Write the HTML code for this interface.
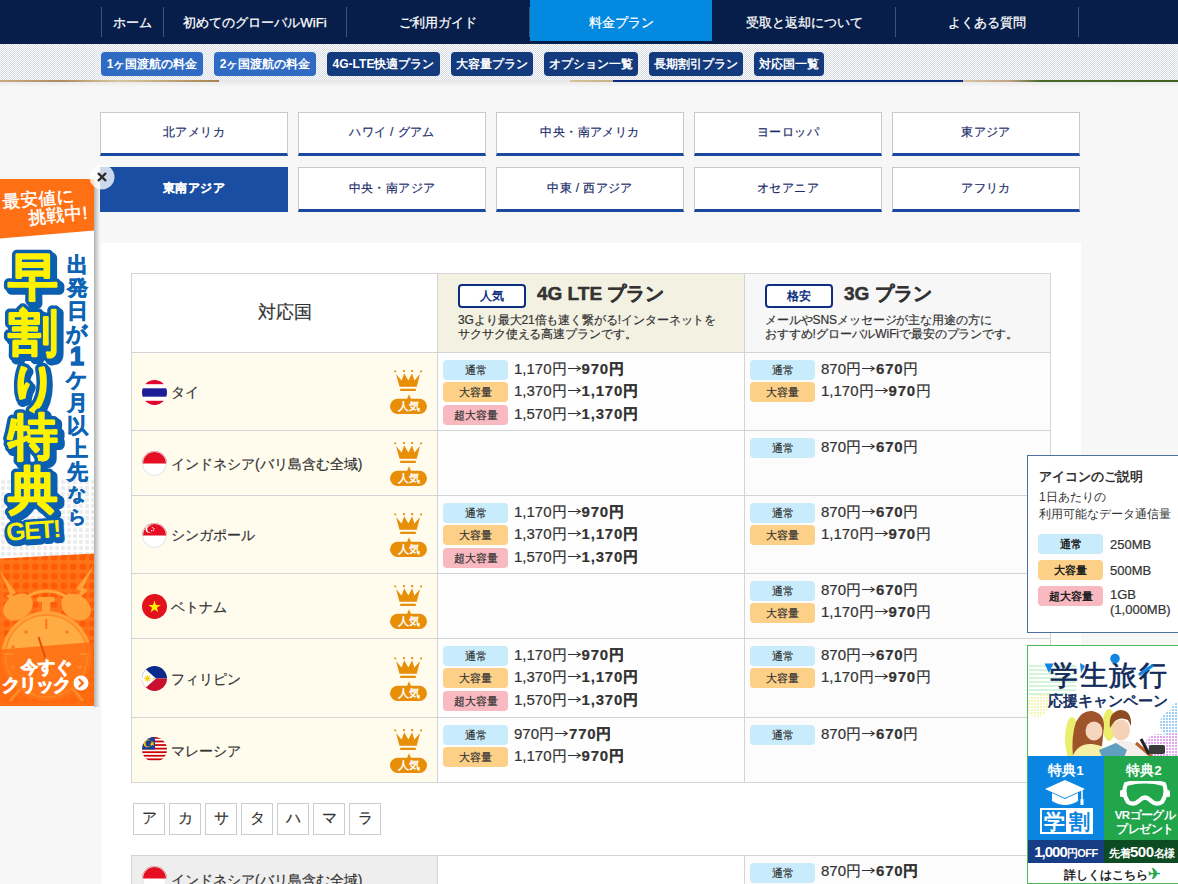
<!DOCTYPE html>
<html lang="ja"><head><meta charset="utf-8">
<style>
*{box-sizing:border-box;margin:0;padding:0}
html,body{width:1178px;height:884px;overflow:hidden}
body{background:#f7f7f7;font-family:"Liberation Sans",sans-serif;color:#333;position:relative}
.a{position:absolute}
/* nav */
#nav{left:0;top:0;width:1178px;height:44px;background:#061e49}
#nav .it{position:absolute;top:0;height:44px;color:#fff;font-size:13.3px;-webkit-text-stroke:.25px #fff;line-height:45px;text-align:center;white-space:nowrap}
#nav .sep{position:absolute;top:7px;width:1px;height:30px;background:#3f5578}
#nav .act{background:#0489e0;height:41px;line-height:45px}
/* strip */
#strip{left:0;top:44px;width:1178px;height:36px;background:repeating-conic-gradient(#d6dbe4 0 25%,#fdfdfe 0 50%) 0 0/2px 2px}
#photo{left:0;top:80px;width:1178px;height:2px;background:linear-gradient(90deg,#c9ab80 0,#b08a60 60px,#d8c7a0 120px,#a8804f 219px,transparent 219px,transparent 570px,#d4c39c 570px,#c8b088 613px,#0a2a7c 613px,#0a2a7c 963px,#d8c4a4 963px,#c0a088 1010px,#4b6a2a 1040px,#3f6020 1178px)}
.sb{position:absolute;top:52px;height:24px;border-radius:4px;background:#133a7c;color:#fff;font-size:12px;font-weight:bold;line-height:25px;text-align:center;white-space:nowrap}
.sb.l{background:#306bc3}
/* region buttons */
.rb{position:absolute;width:188px;height:44px;background:#fff;border:1px solid #c9c9c9;border-bottom:3px solid #1a4aa0;color:#1c2d6b;font-size:12px;letter-spacing:.4px;line-height:39px;text-align:center}
.rb.on{background:#1a4ea2;border-color:#1a4ea2;color:#fff;font-weight:bold}
#panel{left:101px;top:243px;width:980px;height:641px;background:#fff}
.hl{position:absolute;left:131px;width:920px;height:1px;background:#d4d4d4}
.vl{position:absolute;top:273px;width:1px;height:510px;background:#d4d4d4}
.th1{left:132px;top:300px;width:305px;text-align:center;font-size:18px;line-height:24px;color:#333}
.hb{width:68px;height:24px;border:2px solid #0c2f80;border-radius:4px;background:#fff;color:#0c2f80;font-size:12px;font-weight:bold;text-align:center;line-height:20px}
.ht{font-size:19px;font-weight:bold;color:#333;line-height:26px;white-space:nowrap;-webkit-text-stroke:.5px #333}
.hd{font-size:12px;letter-spacing:-0.1px;line-height:14.5px;color:#333;white-space:nowrap}
.flag{width:25px;height:25px}
.flag svg{display:block}
.crown{width:38px;height:45px}
.crown svg{display:block}
.cn{font-size:14px;letter-spacing:-0.3px;line-height:20px;color:#333;white-space:nowrap;margin-top:1px}
.bd{width:65px;height:20px;border-radius:4px;font-size:11px;line-height:20px;text-align:center;color:#333}
.bd.n{background:#c8ecfb}.bd.l{background:#fdd088}.bd.x{background:#f8b9c1}
.ab{position:absolute;top:803px;width:32px;height:32px;border:1px solid #cdcdcd;background:#fff;font-size:15px;line-height:27px;text-align:center;color:#333}
#lg{left:1027px;top:455px;width:160px;height:178px;border:1px solid #4e70a0;background:#fff;color:#333}
.lb{width:65px;height:20px;border-radius:4px;font-size:11px;font-weight:bold;line-height:20px;text-align:center;color:#222}
.lb.n{background:#c8ecfb}.lb.l{background:#fdd088}.lb.x{background:#f8b9c1}
.lv{font-size:13px;line-height:20px;white-space:nowrap;color:#333}
#rbn{left:1027px;top:645px;width:160px;height:239px;border:1px solid #49b95a;border-right:0;background:#fff;overflow:hidden}
#rbn .wt{color:#fff;text-align:center;white-space:nowrap}
#lbn{left:0;top:179px;width:100px;height:528px}
#lbn svg,#cls svg{display:block}
#cls{left:89px;top:164px;width:26px;height:26px}
.pr{font-size:15px;line-height:20px;color:#333;white-space:nowrap;margin-top:-1px}
.pr b{letter-spacing:.8px}
.ar{display:inline-block;vertical-align:1px}
.cn,.pr,.th1,.hd,.lv,.ab,.rb,.bd{-webkit-text-stroke:.2px currentColor}
.cn{letter-spacing:0}
</style></head><body>
<div id="nav" class="a">
  <div class="sep" style="left:101px"></div>
  <div class="it" style="left:102px;width:61px">ホーム</div>
  <div class="sep" style="left:163px"></div>
  <div class="it" style="left:164px;width:182px">初めてのグローバルWiFi</div>
  <div class="sep" style="left:346px"></div>
  <div class="it" style="left:347px;width:182px">ご利用ガイド</div>
  <div class="sep" style="left:529px"></div>
  <div class="it act" style="left:530px;width:182px">料金プラン</div>
  <div class="it" style="left:713px;width:182px">受取と返却について</div>
  <div class="sep" style="left:895px"></div>
  <div class="it" style="left:896px;width:182px">よくある質問</div>
  <div class="sep" style="left:1078px"></div>
</div>
<div id="strip" class="a"></div>
<div class="a" style="left:0;top:80px;width:1178px;height:7px;background:linear-gradient(rgba(0,0,0,.07),rgba(0,0,0,0))"></div>
<div id="photo" class="a"></div>
<div class="sb l" style="left:101px;width:102px">1ヶ国渡航の料金</div>
<div class="sb l" style="left:214px;width:102px">2ヶ国渡航の料金</div>
<div class="sb" style="left:327px;width:113px">4G-LTE快適プラン</div>
<div class="sb" style="left:451px;width:82px">大容量プラン</div>
<div class="sb" style="left:544px;width:94px">オプション一覧</div>
<div class="sb" style="left:649px;width:94px">長期割引プラン</div>
<div class="sb" style="left:754px;width:70px">対応国一覧</div>

<div class="rb" style="left:100px;top:112px">北アメリカ</div>
<div class="rb" style="left:298px;top:112px">ハワイ / グアム</div>
<div class="rb" style="left:496px;top:112px">中央・南アメリカ</div>
<div class="rb" style="left:694px;top:112px">ヨーロッパ</div>
<div class="rb" style="left:892px;top:112px">東アジア</div>
<div class="rb on" style="left:100px;top:167px;height:45px;line-height:40px">東南アジア</div>
<div class="rb" style="left:298px;top:167px;height:45px;line-height:40px">中央・南アジア</div>
<div class="rb" style="left:496px;top:167px;height:45px;line-height:40px">中東 / 西アジア</div>
<div class="rb" style="left:694px;top:167px;height:45px;line-height:40px">オセアニア</div>
<div class="rb" style="left:892px;top:167px;height:45px;line-height:40px">アフリカ</div>

<div id="panel" class="a"></div>
<!--TABLE-->
<div class="a" style="left:131px;top:273px;width:920px;height:510px;border:1px solid #d4d4d4;background:#fff"></div>
<div class="a" style="left:438px;top:274px;width:306px;height:78px;background:#f3f1e2"></div>
<div class="a" style="left:745px;top:274px;width:305px;height:78px;background:#f7f7f7"></div>
<div class="a" style="left:132px;top:353px;width:305px;height:77px;background:#fffcee"></div>
<div class="a" style="left:438px;top:353px;width:306px;height:77px;background:#fefefe"></div>
<div class="a" style="left:745px;top:353px;width:305px;height:77px;background:#fcfcfc"></div>
<div class="a" style="left:132px;top:431px;width:305px;height:64px;background:#fffcee"></div>
<div class="a" style="left:438px;top:431px;width:306px;height:64px;background:#fefefe"></div>
<div class="a" style="left:745px;top:431px;width:305px;height:64px;background:#fcfcfc"></div>
<div class="a" style="left:132px;top:496px;width:305px;height:77px;background:#fffcee"></div>
<div class="a" style="left:438px;top:496px;width:306px;height:77px;background:#fefefe"></div>
<div class="a" style="left:745px;top:496px;width:305px;height:77px;background:#fcfcfc"></div>
<div class="a" style="left:132px;top:574px;width:305px;height:64px;background:#fffcee"></div>
<div class="a" style="left:438px;top:574px;width:306px;height:64px;background:#fefefe"></div>
<div class="a" style="left:745px;top:574px;width:305px;height:64px;background:#fcfcfc"></div>
<div class="a" style="left:132px;top:639px;width:305px;height:78px;background:#fffcee"></div>
<div class="a" style="left:438px;top:639px;width:306px;height:78px;background:#fefefe"></div>
<div class="a" style="left:745px;top:639px;width:305px;height:78px;background:#fcfcfc"></div>
<div class="a" style="left:132px;top:718px;width:305px;height:64px;background:#fffcee"></div>
<div class="a" style="left:438px;top:718px;width:306px;height:64px;background:#fefefe"></div>
<div class="a" style="left:745px;top:718px;width:305px;height:64px;background:#fcfcfc"></div>
<div class="hl" style="top:352px"></div>
<div class="hl" style="top:430px"></div>
<div class="hl" style="top:495px"></div>
<div class="hl" style="top:573px"></div>
<div class="hl" style="top:638px"></div>
<div class="hl" style="top:717px"></div>
<div class="vl" style="left:437px"></div>
<div class="vl" style="left:744px"></div>
<div class="a th1">対応国</div>
<div class="a hb" style="left:458px;top:284px">人気</div>
<div class="a ht" style="left:537px;top:281px">4G LTE プラン</div>
<div class="a hd" style="left:458px;top:312.5px">3Gより最大21倍も速く繋がる!インターネットを<br>サクサク使える高速プランです。</div>
<div class="a hb" style="left:765px;top:284px">格安</div>
<div class="a ht" style="left:844px;top:281px">3G プラン</div>
<div class="a hd" style="left:765px;top:312.5px">メールやSNSメッセージが主な用途の方に<br>おすすめ!グローバルWiFiで最安のプランです。</div>
<div class="a flag th" style="left:142px;top:380px"><svg width="25" height="25" viewBox="0 0 25 25"><defs><clipPath id="cth"><circle cx="12.5" cy="12.5" r="12.5"/></clipPath></defs><g clip-path="url(#cth)"><rect x="0" y="0" width="25" height="25" fill="#fff"/><rect x="0" y="0" width="25" height="4.2" fill="#e4032e"/><rect x="0" y="20.8" width="25" height="4.2" fill="#e4032e"/><rect x="0" y="8.3" width="25" height="8.4" fill="#1d1d96"/></g></svg></div>
<div class="a cn" style="left:171px;top:381px">タイ</div>
<div class="a crown" style="left:389px;top:370px"><svg width="38" height="45" viewBox="0 0 38 45"><g fill="#e88f0a"><rect x="5.2" y="0.5" width="2" height="1.8" rx=".5"/><rect x="14" y="0" width="2" height="1.9" rx=".5"/><rect x="22.1" y="0" width="2" height="1.9" rx=".5"/><rect x="31" y="0.5" width="2" height="1.8" rx=".5"/><polygon points="7,4 12.5,10.6 15.3,3.3 19.3,10.6 23.1,3.3 25.4,10.6 31,4 27.8,16.7 10.5,16.7"/><rect x="11" y="18.7" width="16" height="2.4" rx="1"/><polygon points="20,24.3 22.2,29.5 17.8,29.5"/><rect x="1" y="28.7" width="37" height="15.3" rx="7.65"/></g><text x="19.5" y="40.2" text-anchor="middle" font-size="10.5" font-weight="bold" fill="#fff" font-family="Liberation Sans,sans-serif">人気</text></svg></div>
<div class="a bd n" style="left:443px;top:360px">通常</div>
<div class="a pr b2" style="left:514px;top:360px">1,170円<svg class="ar" width="15" height="8" viewBox="0 0 15 8"><path d="M1 3.5H13.3M9.6 0.9L13.4 3.5 9.6 6.1" stroke="#333" stroke-width="1.1" fill="none"/></svg><b>970</b><b>円</b></div>
<div class="a bd l" style="left:443px;top:382px">大容量</div>
<div class="a pr b2" style="left:514px;top:382px">1,370円<svg class="ar" width="15" height="8" viewBox="0 0 15 8"><path d="M1 3.5H13.3M9.6 0.9L13.4 3.5 9.6 6.1" stroke="#333" stroke-width="1.1" fill="none"/></svg><b>1,170</b><b>円</b></div>
<div class="a bd x" style="left:443px;top:405px">超大容量</div>
<div class="a pr b2" style="left:514px;top:405px">1,570円<svg class="ar" width="15" height="8" viewBox="0 0 15 8"><path d="M1 3.5H13.3M9.6 0.9L13.4 3.5 9.6 6.1" stroke="#333" stroke-width="1.1" fill="none"/></svg><b>1,370</b><b>円</b></div>
<div class="a bd n" style="left:750px;top:360px">通常</div>
<div class="a pr b3" style="left:821px;top:360px">870円<svg class="ar" width="15" height="8" viewBox="0 0 15 8"><path d="M1 3.5H13.3M9.6 0.9L13.4 3.5 9.6 6.1" stroke="#333" stroke-width="1.1" fill="none"/></svg><b>670</b>円</div>
<div class="a bd l" style="left:750px;top:382px">大容量</div>
<div class="a pr b3" style="left:821px;top:382px">1,170円<svg class="ar" width="15" height="8" viewBox="0 0 15 8"><path d="M1 3.5H13.3M9.6 0.9L13.4 3.5 9.6 6.1" stroke="#333" stroke-width="1.1" fill="none"/></svg><b>970</b>円</div>
<div class="a flag id" style="left:142px;top:451px"><svg width="25" height="25" viewBox="0 0 25 25"><defs><clipPath id="cid"><circle cx="12.5" cy="12.5" r="12.5"/></clipPath></defs><g clip-path="url(#cid)"><rect x="0" y="0" width="25" height="25" fill="#fff"/><rect x="0" y="0" width="25" height="12.5" fill="#e60e23"/></g><circle cx="12.5" cy="12.5" r="12" fill="none" stroke="#e2e2e2" stroke-width="1"/></svg></div>
<div class="a cn" style="left:171px;top:453px">インドネシア(バリ島含む全域)</div>
<div class="a crown" style="left:389px;top:442px"><svg width="38" height="45" viewBox="0 0 38 45"><g fill="#e88f0a"><rect x="5.2" y="0.5" width="2" height="1.8" rx=".5"/><rect x="14" y="0" width="2" height="1.9" rx=".5"/><rect x="22.1" y="0" width="2" height="1.9" rx=".5"/><rect x="31" y="0.5" width="2" height="1.8" rx=".5"/><polygon points="7,4 12.5,10.6 15.3,3.3 19.3,10.6 23.1,3.3 25.4,10.6 31,4 27.8,16.7 10.5,16.7"/><rect x="11" y="18.7" width="16" height="2.4" rx="1"/><polygon points="20,24.3 22.2,29.5 17.8,29.5"/><rect x="1" y="28.7" width="37" height="15.3" rx="7.65"/></g><text x="19.5" y="40.2" text-anchor="middle" font-size="10.5" font-weight="bold" fill="#fff" font-family="Liberation Sans,sans-serif">人気</text></svg></div>
<div class="a bd n" style="left:750px;top:438px">通常</div>
<div class="a pr b3" style="left:821px;top:438px">870円<svg class="ar" width="15" height="8" viewBox="0 0 15 8"><path d="M1 3.5H13.3M9.6 0.9L13.4 3.5 9.6 6.1" stroke="#333" stroke-width="1.1" fill="none"/></svg><b>670</b>円</div>
<div class="a flag sg" style="left:142px;top:523px"><svg width="25" height="25" viewBox="0 0 25 25"><defs><clipPath id="csg"><circle cx="12.5" cy="12.5" r="12.5"/></clipPath></defs><g clip-path="url(#csg)"><rect x="0" y="0" width="25" height="25" fill="#fff"/><rect x="0" y="0" width="25" height="12.5" fill="#e60e23"/><circle cx="7.2" cy="6.2" r="3.6" fill="#fff"/><circle cx="8.6" cy="6.2" r="3.3" fill="#e60e23"/><circle cx="10.5" cy="4.6" r=".7" fill="#fff"/><circle cx="12" cy="5.8" r=".7" fill="#fff"/><circle cx="11.4" cy="7.6" r=".7" fill="#fff"/><circle cx="9.6" cy="7.6" r=".7" fill="#fff"/></g><circle cx="12.5" cy="12.5" r="12" fill="none" stroke="#e2e2e2" stroke-width="1"/></svg></div>
<div class="a cn" style="left:171px;top:524px">シンガポール</div>
<div class="a crown" style="left:389px;top:513px"><svg width="38" height="45" viewBox="0 0 38 45"><g fill="#e88f0a"><rect x="5.2" y="0.5" width="2" height="1.8" rx=".5"/><rect x="14" y="0" width="2" height="1.9" rx=".5"/><rect x="22.1" y="0" width="2" height="1.9" rx=".5"/><rect x="31" y="0.5" width="2" height="1.8" rx=".5"/><polygon points="7,4 12.5,10.6 15.3,3.3 19.3,10.6 23.1,3.3 25.4,10.6 31,4 27.8,16.7 10.5,16.7"/><rect x="11" y="18.7" width="16" height="2.4" rx="1"/><polygon points="20,24.3 22.2,29.5 17.8,29.5"/><rect x="1" y="28.7" width="37" height="15.3" rx="7.65"/></g><text x="19.5" y="40.2" text-anchor="middle" font-size="10.5" font-weight="bold" fill="#fff" font-family="Liberation Sans,sans-serif">人気</text></svg></div>
<div class="a bd n" style="left:443px;top:503px">通常</div>
<div class="a pr b2" style="left:514px;top:503px">1,170円<svg class="ar" width="15" height="8" viewBox="0 0 15 8"><path d="M1 3.5H13.3M9.6 0.9L13.4 3.5 9.6 6.1" stroke="#333" stroke-width="1.1" fill="none"/></svg><b>970</b><b>円</b></div>
<div class="a bd l" style="left:443px;top:525px">大容量</div>
<div class="a pr b2" style="left:514px;top:525px">1,370円<svg class="ar" width="15" height="8" viewBox="0 0 15 8"><path d="M1 3.5H13.3M9.6 0.9L13.4 3.5 9.6 6.1" stroke="#333" stroke-width="1.1" fill="none"/></svg><b>1,170</b><b>円</b></div>
<div class="a bd x" style="left:443px;top:548px">超大容量</div>
<div class="a pr b2" style="left:514px;top:548px">1,570円<svg class="ar" width="15" height="8" viewBox="0 0 15 8"><path d="M1 3.5H13.3M9.6 0.9L13.4 3.5 9.6 6.1" stroke="#333" stroke-width="1.1" fill="none"/></svg><b>1,370</b><b>円</b></div>
<div class="a bd n" style="left:750px;top:503px">通常</div>
<div class="a pr b3" style="left:821px;top:503px">870円<svg class="ar" width="15" height="8" viewBox="0 0 15 8"><path d="M1 3.5H13.3M9.6 0.9L13.4 3.5 9.6 6.1" stroke="#333" stroke-width="1.1" fill="none"/></svg><b>670</b>円</div>
<div class="a bd l" style="left:750px;top:525px">大容量</div>
<div class="a pr b3" style="left:821px;top:525px">1,170円<svg class="ar" width="15" height="8" viewBox="0 0 15 8"><path d="M1 3.5H13.3M9.6 0.9L13.4 3.5 9.6 6.1" stroke="#333" stroke-width="1.1" fill="none"/></svg><b>970</b>円</div>
<div class="a flag vn" style="left:142px;top:594px"><svg width="25" height="25" viewBox="0 0 25 25"><defs><clipPath id="cvn"><circle cx="12.5" cy="12.5" r="12.5"/></clipPath></defs><g clip-path="url(#cvn)"><rect x="0" y="0" width="25" height="25" fill="#e3111b"/><polygon points="12.5,6.5 14,11 18.7,11 14.9,13.8 16.3,18.3 12.5,15.5 8.7,18.3 10.1,13.8 6.3,11 11,11" fill="#fff100"/></g></svg></div>
<div class="a cn" style="left:171px;top:596px">ベトナム</div>
<div class="a crown" style="left:389px;top:585px"><svg width="38" height="45" viewBox="0 0 38 45"><g fill="#e88f0a"><rect x="5.2" y="0.5" width="2" height="1.8" rx=".5"/><rect x="14" y="0" width="2" height="1.9" rx=".5"/><rect x="22.1" y="0" width="2" height="1.9" rx=".5"/><rect x="31" y="0.5" width="2" height="1.8" rx=".5"/><polygon points="7,4 12.5,10.6 15.3,3.3 19.3,10.6 23.1,3.3 25.4,10.6 31,4 27.8,16.7 10.5,16.7"/><rect x="11" y="18.7" width="16" height="2.4" rx="1"/><polygon points="20,24.3 22.2,29.5 17.8,29.5"/><rect x="1" y="28.7" width="37" height="15.3" rx="7.65"/></g><text x="19.5" y="40.2" text-anchor="middle" font-size="10.5" font-weight="bold" fill="#fff" font-family="Liberation Sans,sans-serif">人気</text></svg></div>
<div class="a bd n" style="left:750px;top:581px">通常</div>
<div class="a pr b3" style="left:821px;top:581px">870円<svg class="ar" width="15" height="8" viewBox="0 0 15 8"><path d="M1 3.5H13.3M9.6 0.9L13.4 3.5 9.6 6.1" stroke="#333" stroke-width="1.1" fill="none"/></svg><b>670</b>円</div>
<div class="a bd l" style="left:750px;top:603px">大容量</div>
<div class="a pr b3" style="left:821px;top:603px">1,170円<svg class="ar" width="15" height="8" viewBox="0 0 15 8"><path d="M1 3.5H13.3M9.6 0.9L13.4 3.5 9.6 6.1" stroke="#333" stroke-width="1.1" fill="none"/></svg><b>970</b>円</div>
<div class="a flag ph" style="left:142px;top:666px"><svg width="25" height="25" viewBox="0 0 25 25"><defs><clipPath id="cph"><circle cx="12.5" cy="12.5" r="12.5"/></clipPath></defs><g clip-path="url(#cph)"><rect x="0" y="0" width="25" height="12.5" fill="#0b2a8c"/><rect x="0" y="12.5" width="25" height="12.5" fill="#c8102e"/><polygon points="0,0 14,12.5 0,25" fill="#fff"/><circle cx="5.5" cy="12.5" r="2.2" fill="#fcd116"/><g stroke="#fcd116" stroke-width=".8"><line x1="2" y1="12.5" x2="9" y2="12.5"/><line x1="5.5" y1="9" x2="5.5" y2="16"/><line x1="3" y1="10" x2="8" y2="15"/><line x1="8" y1="10" x2="3" y2="15"/></g><circle cx="2" cy="4" r=".8" fill="#fcd116"/><circle cx="2" cy="21" r=".8" fill="#fcd116"/><circle cx="11.5" cy="12.5" r=".8" fill="#fcd116"/></g></svg></div>
<div class="a cn" style="left:171px;top:668px">フィリピン</div>
<div class="a crown" style="left:389px;top:657px"><svg width="38" height="45" viewBox="0 0 38 45"><g fill="#e88f0a"><rect x="5.2" y="0.5" width="2" height="1.8" rx=".5"/><rect x="14" y="0" width="2" height="1.9" rx=".5"/><rect x="22.1" y="0" width="2" height="1.9" rx=".5"/><rect x="31" y="0.5" width="2" height="1.8" rx=".5"/><polygon points="7,4 12.5,10.6 15.3,3.3 19.3,10.6 23.1,3.3 25.4,10.6 31,4 27.8,16.7 10.5,16.7"/><rect x="11" y="18.7" width="16" height="2.4" rx="1"/><polygon points="20,24.3 22.2,29.5 17.8,29.5"/><rect x="1" y="28.7" width="37" height="15.3" rx="7.65"/></g><text x="19.5" y="40.2" text-anchor="middle" font-size="10.5" font-weight="bold" fill="#fff" font-family="Liberation Sans,sans-serif">人気</text></svg></div>
<div class="a bd n" style="left:443px;top:646px">通常</div>
<div class="a pr b2" style="left:514px;top:646px">1,170円<svg class="ar" width="15" height="8" viewBox="0 0 15 8"><path d="M1 3.5H13.3M9.6 0.9L13.4 3.5 9.6 6.1" stroke="#333" stroke-width="1.1" fill="none"/></svg><b>970</b><b>円</b></div>
<div class="a bd l" style="left:443px;top:668px">大容量</div>
<div class="a pr b2" style="left:514px;top:668px">1,370円<svg class="ar" width="15" height="8" viewBox="0 0 15 8"><path d="M1 3.5H13.3M9.6 0.9L13.4 3.5 9.6 6.1" stroke="#333" stroke-width="1.1" fill="none"/></svg><b>1,170</b><b>円</b></div>
<div class="a bd x" style="left:443px;top:691px">超大容量</div>
<div class="a pr b2" style="left:514px;top:691px">1,570円<svg class="ar" width="15" height="8" viewBox="0 0 15 8"><path d="M1 3.5H13.3M9.6 0.9L13.4 3.5 9.6 6.1" stroke="#333" stroke-width="1.1" fill="none"/></svg><b>1,370</b><b>円</b></div>
<div class="a bd n" style="left:750px;top:646px">通常</div>
<div class="a pr b3" style="left:821px;top:646px">870円<svg class="ar" width="15" height="8" viewBox="0 0 15 8"><path d="M1 3.5H13.3M9.6 0.9L13.4 3.5 9.6 6.1" stroke="#333" stroke-width="1.1" fill="none"/></svg><b>670</b>円</div>
<div class="a bd l" style="left:750px;top:668px">大容量</div>
<div class="a pr b3" style="left:821px;top:668px">1,170円<svg class="ar" width="15" height="8" viewBox="0 0 15 8"><path d="M1 3.5H13.3M9.6 0.9L13.4 3.5 9.6 6.1" stroke="#333" stroke-width="1.1" fill="none"/></svg><b>970</b>円</div>
<div class="a flag my" style="left:142px;top:737px"><svg width="25" height="25" viewBox="0 0 25 25"><defs><clipPath id="cmy"><circle cx="12.5" cy="12.5" r="12.5"/></clipPath></defs><g clip-path="url(#cmy)"><rect x="0" y="0" width="25" height="25" fill="#fff"/><rect x="0" y="0.00" width="25" height="1.79" fill="#cc0001"/><rect x="0" y="3.57" width="25" height="1.79" fill="#cc0001"/><rect x="0" y="7.14" width="25" height="1.79" fill="#cc0001"/><rect x="0" y="10.71" width="25" height="1.79" fill="#cc0001"/><rect x="0" y="14.29" width="25" height="1.79" fill="#cc0001"/><rect x="0" y="17.86" width="25" height="1.79" fill="#cc0001"/><rect x="0" y="21.43" width="25" height="1.79" fill="#cc0001"/><rect x="0" y="0" width="13" height="12.5" fill="#1c3f94"/><circle cx="5.6" cy="6.4" r="3.8" fill="#fc0"/><circle cx="6.8" cy="6.4" r="3.2" fill="#1c3f94"/><polygon points="10,3.6 10.7,5.6 12.6,5.4 11.2,6.8 12.2,8.6 10.3,8 9.4,9.6 9.2,7.8 7.4,7.4 9.1,6.4" fill="#fc0"/></g></svg></div>
<div class="a cn" style="left:171px;top:740px">マレーシア</div>
<div class="a crown" style="left:389px;top:729px"><svg width="38" height="45" viewBox="0 0 38 45"><g fill="#e88f0a"><rect x="5.2" y="0.5" width="2" height="1.8" rx=".5"/><rect x="14" y="0" width="2" height="1.9" rx=".5"/><rect x="22.1" y="0" width="2" height="1.9" rx=".5"/><rect x="31" y="0.5" width="2" height="1.8" rx=".5"/><polygon points="7,4 12.5,10.6 15.3,3.3 19.3,10.6 23.1,3.3 25.4,10.6 31,4 27.8,16.7 10.5,16.7"/><rect x="11" y="18.7" width="16" height="2.4" rx="1"/><polygon points="20,24.3 22.2,29.5 17.8,29.5"/><rect x="1" y="28.7" width="37" height="15.3" rx="7.65"/></g><text x="19.5" y="40.2" text-anchor="middle" font-size="10.5" font-weight="bold" fill="#fff" font-family="Liberation Sans,sans-serif">人気</text></svg></div>
<div class="a bd n" style="left:443px;top:725px">通常</div>
<div class="a pr b2" style="left:514px;top:725px">970円<svg class="ar" width="15" height="8" viewBox="0 0 15 8"><path d="M1 3.5H13.3M9.6 0.9L13.4 3.5 9.6 6.1" stroke="#333" stroke-width="1.1" fill="none"/></svg><b>770</b><b>円</b></div>
<div class="a bd l" style="left:443px;top:747px">大容量</div>
<div class="a pr b2" style="left:514px;top:747px">1,170円<svg class="ar" width="15" height="8" viewBox="0 0 15 8"><path d="M1 3.5H13.3M9.6 0.9L13.4 3.5 9.6 6.1" stroke="#333" stroke-width="1.1" fill="none"/></svg><b>970</b><b>円</b></div>
<div class="a bd n" style="left:750px;top:725px">通常</div>
<div class="a pr b3" style="left:821px;top:725px">870円<svg class="ar" width="15" height="8" viewBox="0 0 15 8"><path d="M1 3.5H13.3M9.6 0.9L13.4 3.5 9.6 6.1" stroke="#333" stroke-width="1.1" fill="none"/></svg><b>670</b>円</div>
<div class="ab" style="left:133px">ア</div><div class="ab" style="left:169px">カ</div><div class="ab" style="left:205px">サ</div><div class="ab" style="left:241px">タ</div><div class="ab" style="left:277px">ハ</div><div class="ab" style="left:313px">マ</div><div class="ab" style="left:349px">ラ</div>
<div class="a" style="left:131px;top:855px;width:920px;height:40px;border:1px solid #d4d4d4;background:#fff"></div>
<div class="a" style="left:132px;top:856px;width:305px;height:40px;background:#eeeeee"></div>
<div class="a" style="left:745px;top:856px;width:305px;height:40px;background:#fcfcfc"></div>
<div class="a" style="left:437px;top:855px;width:1px;height:40px;background:#d4d4d4"></div><div class="a" style="left:744px;top:855px;width:1px;height:40px;background:#d4d4d4"></div>
<div class="a flag" style="left:142px;top:866px"><svg width="25" height="25" viewBox="0 0 25 25"><defs><clipPath id="cid2"><circle cx="12.5" cy="12.5" r="12.5"/></clipPath></defs><g clip-path="url(#cid2)"><rect x="0" y="0" width="25" height="25" fill="#fff"/><rect x="0" y="0" width="25" height="12.5" fill="#e60e23"/></g><circle cx="12.5" cy="12.5" r="12" fill="none" stroke="#e2e2e2" stroke-width="1"/></svg></div>
<div class="a cn" style="left:171px;top:869px">インドネシア(バリ島含む全域)</div>
<div class="a bd n" style="left:750px;top:863px">通常</div>
<div class="a pr b3" style="left:821px;top:862px">870円<svg class="ar" width="15" height="8" viewBox="0 0 15 8"><path d="M1 3.5H13.3M9.6 0.9L13.4 3.5 9.6 6.1" stroke="#333" stroke-width="1.1" fill="none"/></svg><b>670円</b></div>

<!--LEGEND-->
<div id="lg" class="a">
  <div class="a" style="left:11px;top:12px;font-size:13px;font-weight:bold;line-height:18px;white-space:nowrap">アイコンのご説明</div>
  <div class="a" style="left:11px;top:33px;font-size:12px;line-height:16.5px;white-space:nowrap">1日あたりの<br>利用可能なデータ通信量</div>
  <div class="a lb n" style="left:10px;top:78px">通常</div>
  <div class="a lv" style="left:82px;top:79px">250MB</div>
  <div class="a lb l" style="left:10px;top:104px">大容量</div>
  <div class="a lv" style="left:82px;top:105px">500MB</div>
  <div class="a lb x" style="left:10px;top:130px">超大容量</div>
  <div class="a lv" style="left:82px;top:131px;line-height:15px">1GB<br>(1,000MB)</div>
</div>
<!--LEGEND-END-->
<!--BANNER-R-->
<div id="rbn" class="a">
  <svg class="a" style="left:0;top:0" width="152" height="111" viewBox="0 0 152 111">
    <defs><pattern id="hb" width="3" height="3" patternUnits="userSpaceOnUse"><rect width="3" height="3" fill="#fff"/><rect width="2" height="2" fill="#9fcff5"/></pattern>
    <pattern id="hp" width="3" height="3" patternUnits="userSpaceOnUse"><rect width="3" height="3" fill="#fff"/><rect width="2" height="2" fill="#e3a6ec"/></pattern>
    <pattern id="hy" width="3" height="3" patternUnits="userSpaceOnUse"><rect width="3" height="3" fill="#fff"/><rect width="2" height="2" fill="#f6f5b8"/></pattern></defs>
    <g stroke="#c9f0cf" stroke-width="1.3">
      <line x1="1" y1="20" x2="48" y2="20"/><line x1="1" y1="24" x2="48" y2="24"/><line x1="1" y1="28" x2="48" y2="28"/><line x1="1" y1="32" x2="48" y2="32"/><line x1="1" y1="36" x2="48" y2="36"/><line x1="1" y1="40" x2="48" y2="40"/><line x1="1" y1="44" x2="48" y2="44"/><line x1="1" y1="48" x2="40" y2="48"/>
    </g>
    <g fill="url(#hy)"><circle cx="9" cy="60" r="11"/><circle cx="16" cy="56" r="8"/></g>
    <g fill="url(#hb)"><circle cx="146" cy="78" r="14"/><circle cx="152" cy="66" r="10"/></g>
    <g fill="url(#hp)"><circle cx="130" cy="102" r="14"/><circle cx="148" cy="98" r="12"/></g>
    <ellipse cx="44" cy="93" rx="7" ry="22" fill="#ebee6c"/>
    <ellipse cx="81" cy="79" rx="6.5" ry="16" fill="#ebee6c"/>
    <path d="M45 111 Q43 90 48 76 Q54 64 64 65 Q76 67 76 80 L74 100 Q60 104 52 111Z" fill="#a0542a"/>
    <ellipse cx="66" cy="85" rx="8.5" ry="9.5" fill="#f6d6bf"/>
    <path d="M44 111 Q50 97 64 98 Q78 99 84 111Z" fill="#f6f0a6"/>
    <path d="M82 82 Q80 66 92 64 Q104 64 103 80 L100 74 Q92 70 86 76Z" fill="#8e4a22"/>
    <ellipse cx="93" cy="84" rx="9" ry="10.5" fill="#f5d2b6"/>
    <path d="M78 111 Q82 94 95 95 Q112 95 123 111Z" fill="#f4efe8"/>
    <path d="M108 97 L124 111" stroke="#b5602e" stroke-width="3"/>
    <path d="M113 93 L121 108" stroke="#222" stroke-width="3"/>
    <path d="M71 104 L88 97 L99 104 L96 111 L74 111Z" fill="#5f9fbf"/>
    <rect x="121" y="99" width="16" height="9" rx="2" fill="#3a3a3a"/>
    <text x="81" y="39" text-anchor="middle" font-size="27.5" fill="#102a5c" stroke="#102a5c" stroke-width=".6" font-family="Liberation Sans,sans-serif" letter-spacing="1.5">学生旅行</text>
    <circle cx="87" cy="12.6" r="4.8" fill="#1187e3"/>
    <path d="M16.5 17.5 L25.5 17.5 L21 27Z" fill="#1187e3"/><path d="M52 17 L57 20 L53 27Z" fill="#1187e3"/><path d="M112 28 L124 20" stroke="#1187e3" stroke-width="3.2" stroke-linecap="round"/>
    <text x="79.5" y="60" text-anchor="middle" font-size="15" fill="#102a5c" stroke="#102a5c" stroke-width=".6" font-family="Liberation Sans,sans-serif">応援キャンペーン</text>
  </svg>
  <div class="a" style="left:0;top:110px;width:76px;height:84px;background:#0a86e2"></div>
  <div class="a" style="left:76px;top:110px;width:80px;height:84px;background:#22a64c"></div>
  <div class="a" style="left:0;top:194px;width:76px;height:23px;background:#173d86"></div>
  <div class="a" style="left:76px;top:194px;width:80px;height:23px;background:#0d4b22"></div>
  <div class="a wt" style="left:0;top:115px;width:76px;font-size:13.5px;font-weight:bold;line-height:20px">特典1</div>
  <div class="a wt" style="left:76px;top:115px;width:80px;font-size:13.5px;font-weight:bold;line-height:20px">特典2</div>
  <svg class="a" style="left:10px;top:133px" width="60" height="56" viewBox="0 0 60 56">
    <polygon points="27,1 47,10 27,19 7,10" fill="#fff"/>
    <path d="M14 14 L14 22 Q27 30 40 22 L40 14 L27 20Z" fill="#fff"/>
    <line x1="44" y1="11" x2="44" y2="24" stroke="#fff" stroke-width="1.5"/>
    <rect x="42.5" y="20" width="3" height="6" fill="#fff"/>
    <rect x="2" y="29" width="53" height="26" fill="#fff"/>
    <rect x="4" y="31" width="24" height="22" fill="#0a86e2"/>
    <text x="16" y="50" text-anchor="middle" font-size="21" font-weight="bold" fill="#fff" font-family="Liberation Sans,sans-serif">学</text>
    <text x="41" y="50" text-anchor="middle" font-size="21" font-weight="bold" fill="#0a86e2" font-family="Liberation Sans,sans-serif">割</text>
  </svg>
  <svg class="a" style="left:92px;top:135px" width="50" height="26" viewBox="0 0 50 26">
    <path d="M6 3 Q25 -2 44 3 Q48 12 42 21 Q36 25 30 19 Q25 14 20 19 Q14 25 8 21 Q2 12 6 3Z" fill="none" stroke="#fff" stroke-width="4.2"/>
    <rect x="0" y="9" width="4" height="7" rx="1.5" fill="#fff"/><rect x="46" y="9" width="4" height="7" rx="1.5" fill="#fff"/>
  </svg>
  <div class="a wt" style="left:77px;top:162px;width:80px;font-size:11.5px;font-weight:bold;line-height:14px;letter-spacing:-0.6px">VRゴーグル<br>プレゼント</div>
  <div class="a wt" style="left:0;top:196px;width:76px;font-size:15px;font-weight:bold;line-height:19px;letter-spacing:-1px;white-space:nowrap">1,000<span style="font-size:11px;letter-spacing:-0.5px">円OFF</span></div>
  <div class="a wt" style="left:81px;top:196px;width:82px;font-size:15px;font-weight:bold;line-height:19px;letter-spacing:-0.5px;white-space:nowrap;text-align:left"><span style="font-size:11px">先着</span>500<span style="font-size:11px">名様</span></div>
  <div class="a" style="left:36px;top:219px;font-size:12px;font-weight:bold;line-height:18px;color:#222;white-space:nowrap">詳しくはこちら<span style="color:#22a64c;font-size:15px">✈</span></div>
</div>
<!--BANNER-L-->
<div id="lbn" class="a"><svg width="100" height="528" viewBox="0 0 100 528">
<defs><linearGradient id="shd" x1="0" x2="1"><stop offset="0" stop-color="#000" stop-opacity=".28"/><stop offset="1" stop-color="#000" stop-opacity="0"/></linearGradient><pattern id="dots" width="6" height="6" patternUnits="userSpaceOnUse"><circle cx="3" cy="3" r="2.2" fill="#ececec"/></pattern><pattern id="odots" width="9.5" height="9.5" patternUnits="userSpaceOnUse" x="2" y="3"><rect width="9.5" height="9.5" fill="#ff7418"/><circle cx="4.75" cy="4.75" r="3.4" fill="#ff5a05"/></pattern><clipPath id="lbclip"><rect x="0" y="0" width="94" height="527"/></clipPath></defs>
<rect x="94" y="2" width="6" height="526" fill="url(#shd)"/>
<g clip-path="url(#lbclip)">
<rect x="0" y="0" width="94" height="527" fill="#fff"/>
<rect x="0" y="300" width="94" height="80" fill="url(#dots)"/>
<polygon points="0,0 94,0 94,51.5 0,59.5" fill="#ff6f14"/>
<g transform="rotate(-5 47 30)" fill="#fff" stroke="#fff" stroke-width=".5" font-family="Liberation Sans,sans-serif" font-size="17.5"><text x="3" y="25">最安値に</text><text x="28" y="43">挑戦中!</text></g>
<text x="35.5" y="100.5" text-anchor="middle" dominant-baseline="central" font-size="50" font-family="Liberation Sans,sans-serif" fill="#0b5fb0" stroke="#0b5fb0" stroke-width="11" stroke-linejoin="round">早</text>
<text x="33" y="98" text-anchor="middle" dominant-baseline="central" font-size="50" font-family="Liberation Sans,sans-serif" fill="#0b5fb0" stroke="#0b5fb0" stroke-width="10" stroke-linejoin="round">早</text>
<text x="33" y="98" text-anchor="middle" dominant-baseline="central" font-size="50" font-family="Liberation Sans,sans-serif" fill="#fff200" stroke="#fff200" stroke-width="3" stroke-linejoin="round">早</text>
<text x="35.5" y="156.5" text-anchor="middle" dominant-baseline="central" font-size="50" font-family="Liberation Sans,sans-serif" fill="#0b5fb0" stroke="#0b5fb0" stroke-width="11" stroke-linejoin="round">割</text>
<text x="33" y="154" text-anchor="middle" dominant-baseline="central" font-size="50" font-family="Liberation Sans,sans-serif" fill="#0b5fb0" stroke="#0b5fb0" stroke-width="10" stroke-linejoin="round">割</text>
<text x="33" y="154" text-anchor="middle" dominant-baseline="central" font-size="50" font-family="Liberation Sans,sans-serif" fill="#fff200" stroke="#fff200" stroke-width="3" stroke-linejoin="round">割</text>
<text x="35.5" y="210.5" text-anchor="middle" dominant-baseline="central" font-size="50" font-family="Liberation Sans,sans-serif" fill="#0b5fb0" stroke="#0b5fb0" stroke-width="11" stroke-linejoin="round">り</text>
<text x="33" y="208" text-anchor="middle" dominant-baseline="central" font-size="50" font-family="Liberation Sans,sans-serif" fill="#0b5fb0" stroke="#0b5fb0" stroke-width="10" stroke-linejoin="round">り</text>
<text x="33" y="208" text-anchor="middle" dominant-baseline="central" font-size="50" font-family="Liberation Sans,sans-serif" fill="#fff200" stroke="#fff200" stroke-width="3" stroke-linejoin="round">り</text>
<text x="35.5" y="260.5" text-anchor="middle" dominant-baseline="central" font-size="50" font-family="Liberation Sans,sans-serif" fill="#0b5fb0" stroke="#0b5fb0" stroke-width="11" stroke-linejoin="round">特</text>
<text x="33" y="258" text-anchor="middle" dominant-baseline="central" font-size="50" font-family="Liberation Sans,sans-serif" fill="#0b5fb0" stroke="#0b5fb0" stroke-width="10" stroke-linejoin="round">特</text>
<text x="33" y="258" text-anchor="middle" dominant-baseline="central" font-size="50" font-family="Liberation Sans,sans-serif" fill="#fff200" stroke="#fff200" stroke-width="3" stroke-linejoin="round">特</text>
<text x="35.5" y="313.5" text-anchor="middle" dominant-baseline="central" font-size="50" font-family="Liberation Sans,sans-serif" fill="#0b5fb0" stroke="#0b5fb0" stroke-width="11" stroke-linejoin="round">典</text>
<text x="33" y="311" text-anchor="middle" dominant-baseline="central" font-size="50" font-family="Liberation Sans,sans-serif" fill="#0b5fb0" stroke="#0b5fb0" stroke-width="10" stroke-linejoin="round">典</text>
<text x="33" y="311" text-anchor="middle" dominant-baseline="central" font-size="50" font-family="Liberation Sans,sans-serif" fill="#fff200" stroke="#fff200" stroke-width="3" stroke-linejoin="round">典</text>
<g transform="rotate(-4 33 351)"><text x="34" y="353" text-anchor="middle" dominant-baseline="central" font-size="25" font-weight="bold" font-family="Liberation Sans,sans-serif" fill="#0b5fb0" stroke="#0b5fb0" stroke-width="8" stroke-linejoin="round" letter-spacing="-1.5">GET!</text><text x="33" y="351" text-anchor="middle" dominant-baseline="central" font-size="25" font-weight="bold" font-family="Liberation Sans,sans-serif" fill="#fff200" stroke="#0b5fb0" stroke-width="5" stroke-linejoin="round" paint-order="stroke" letter-spacing="-1.5">GET!</text></g>
<text x="77" y="85" text-anchor="middle" dominant-baseline="central" font-size="21" font-weight="bold" font-family="Liberation Sans,sans-serif" fill="#0d64b5" stroke="#0d64b5" stroke-width="0.6">出</text>
<text x="77" y="108" text-anchor="middle" dominant-baseline="central" font-size="21" font-weight="bold" font-family="Liberation Sans,sans-serif" fill="#0d64b5" stroke="#0d64b5" stroke-width="0.6">発</text>
<text x="77" y="131" text-anchor="middle" dominant-baseline="central" font-size="21" font-weight="bold" font-family="Liberation Sans,sans-serif" fill="#0d64b5" stroke="#0d64b5" stroke-width="0.6">日</text>
<text x="77" y="154" text-anchor="middle" dominant-baseline="central" font-size="21" font-weight="bold" font-family="Liberation Sans,sans-serif" fill="#0d64b5" stroke="#0d64b5" stroke-width="0.6">が</text>
<text x="77" y="177" text-anchor="middle" dominant-baseline="central" font-size="25" font-weight="bold" font-family="Liberation Sans,sans-serif" fill="#0d64b5" stroke="#0d64b5" stroke-width="1.6">1</text>
<text x="77" y="200" text-anchor="middle" dominant-baseline="central" font-size="21" font-weight="bold" font-family="Liberation Sans,sans-serif" fill="#0d64b5" stroke="#0d64b5" stroke-width="0.6">ケ</text>
<text x="77" y="223" text-anchor="middle" dominant-baseline="central" font-size="21" font-weight="bold" font-family="Liberation Sans,sans-serif" fill="#0d64b5" stroke="#0d64b5" stroke-width="0.6">月</text>
<text x="77" y="246" text-anchor="middle" dominant-baseline="central" font-size="21" font-weight="bold" font-family="Liberation Sans,sans-serif" fill="#0d64b5" stroke="#0d64b5" stroke-width="0.6">以</text>
<text x="77" y="269" text-anchor="middle" dominant-baseline="central" font-size="21" font-weight="bold" font-family="Liberation Sans,sans-serif" fill="#0d64b5" stroke="#0d64b5" stroke-width="0.6">上</text>
<text x="77" y="292" text-anchor="middle" dominant-baseline="central" font-size="21" font-weight="bold" font-family="Liberation Sans,sans-serif" fill="#0d64b5" stroke="#0d64b5" stroke-width="0.6">先</text>
<text x="77" y="315" text-anchor="middle" dominant-baseline="central" font-size="18" font-weight="bold" font-family="Liberation Sans,sans-serif" fill="#0d64b5" stroke="#0d64b5" stroke-width="0.6">な</text>
<text x="77" y="338" text-anchor="middle" dominant-baseline="central" font-size="18" font-weight="bold" font-family="Liberation Sans,sans-serif" fill="#0d64b5" stroke="#0d64b5" stroke-width="0.6">ら</text>
<polygon points="0,379.5 94,374.5 94,527 0,527" fill="url(#odots)"/>
<g fill="#ffa23a"><ellipse cx="18" cy="428" rx="16" ry="12" transform="rotate(-35 18 428)"/><ellipse cx="76" cy="428" rx="16" ry="12" transform="rotate(35 76 428)"/><rect x="42" y="421" width="8" height="12"/><rect x="37" y="418" width="18" height="5" rx="2"/><polygon points="0,392 16,414 12,416 24,432 6,417 10,415"/><polygon points="94,386 76,410 81,412 70,428 88,411 83,409"/></g>
<path d="M14 428 Q46 396 80 428" fill="none" stroke="#ffa23a" stroke-width="3"/>
<circle cx="46.5" cy="477" r="45" fill="#ffa23a"/>
<circle cx="46.5" cy="477" r="41" fill="#ffac45" stroke="#ff8a22" stroke-width="1.6"/>
<g fill="#ff7a22"><circle cx="26" cy="453" r="1.8"/><circle cx="67" cy="453" r="1.8"/><circle cx="13" cy="468" r="1.8"/><circle cx="80" cy="468" r="1.8"/></g>
<rect x="45" y="440" width="2.4" height="10" fill="#ff7a22"/>
<polygon points="0,470.5 94,463 94,527 0,527" fill="#ff6a10" opacity=".82"/>
<line x1="38.5" y1="458" x2="49" y2="490" stroke="#e2520a" stroke-width="2"/>
<path d="M5.5 477 A41 41 0 0 0 87.5 477" fill="none" stroke="#ff8a2a" stroke-width="1.6" opacity=".9"/>
<g fill="#ff8a2a"><rect x="4" y="474" width="9" height="2"/><rect x="80" y="474" width="9" height="2"/><circle cx="13" cy="488" r="1.8"/><circle cx="80" cy="488" r="1.8"/></g>
<path d="M10 522 L20 510 M83 522 L73 510" stroke="#ff8a2a" stroke-width="3"/>
<line x1="49" y1="488" x2="46" y2="478" stroke="#ff8a2a" stroke-width="2"/>
<g fill="#fff" font-family="Liberation Sans,sans-serif" font-weight="bold" stroke="#fff" stroke-width=".8"><text x="46" y="488" text-anchor="middle" dominant-baseline="central" font-size="17">今すぐ</text><text x="36" y="506" text-anchor="middle" dominant-baseline="central" font-size="17.5" letter-spacing="-.8">クリック</text></g>
<circle cx="81" cy="504" r="7.5" fill="#fff"/><path d="M78.8 500 L82.8 504 L78.8 508" fill="none" stroke="#ff6b10" stroke-width="2.2"/>
</g></svg></div>
<div id="cls" class="a"><svg width="26" height="26" viewBox="0 0 26 26"><circle cx="13" cy="13" r="12.5" fill="#fff" fill-opacity=".78"/><path d="M9 9L17 17M17 9L9 17" stroke="#2a2a2a" stroke-width="2.4"/></svg></div>
</body></html>
